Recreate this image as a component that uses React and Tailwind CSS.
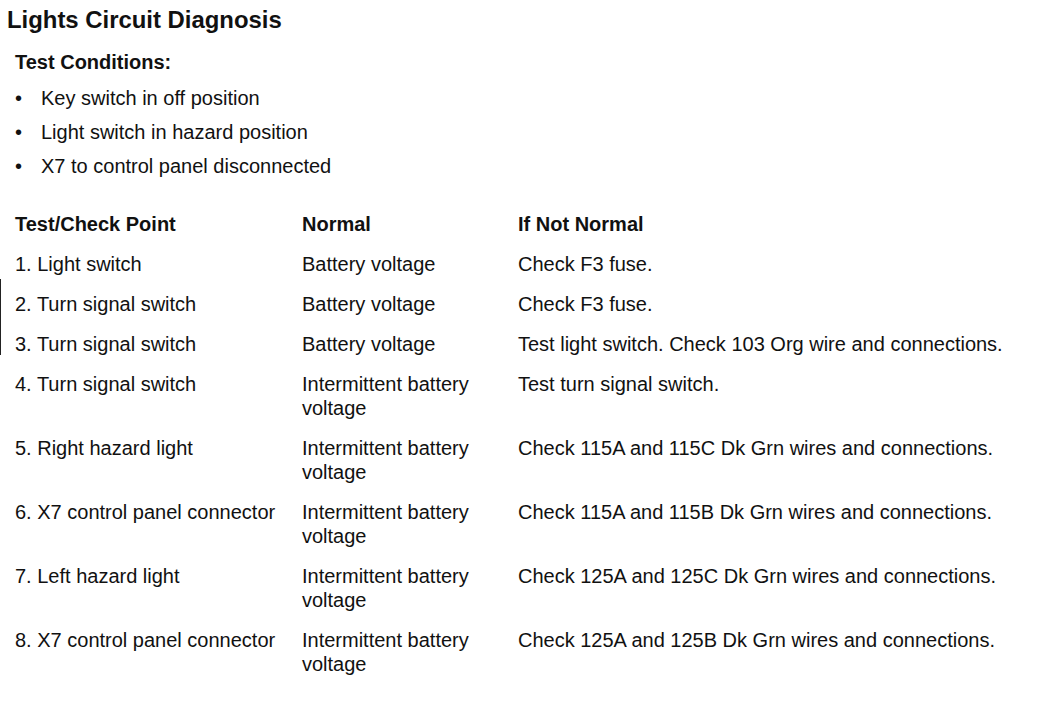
const conditions = [
  'Key switch in off position',
  'Light switch in hazard position',
  'X7 to control panel disconnected',
];

const rows = [
  ['1. Light switch', 'Battery voltage', 'Check F3 fuse.'],
  ['2. Turn signal switch', 'Battery voltage', 'Check F3 fuse.'],
  ['3. Turn signal switch', 'Battery voltage', 'Test light switch. Check 103 Org wire and connections.'],
  ['4. Turn signal switch', 'Intermittent battery voltage', 'Test turn signal switch.'],
  ['5. Right hazard light', 'Intermittent battery voltage', 'Check 115A and 115C Dk Grn wires and connections.'],
  ['6. X7 control panel connector', 'Intermittent battery voltage', 'Check 115A and 115B Dk Grn wires and connections.'],
  ['7. Left hazard light', 'Intermittent battery voltage', 'Check 125A and 125C Dk Grn wires and connections.'],
  ['8. X7 control panel connector', 'Intermittent battery voltage', 'Check 125A and 125B Dk Grn wires and connections.'],
];

export default function App() {
  return (
    <div className="relative min-h-[704px] w-[1039px] bg-white text-[#111] font-['Liberation_Sans',Arial,sans-serif] text-[20px] leading-[24px]">
      {/* change bar next to rows 2-3 */}
      <div className="absolute left-0 top-[279px] h-[76px] w-px bg-[#222]" />

      <h1 className="pt-[6px] pl-[7px] text-[23.9px] leading-[28px] font-bold">
        Lights Circuit Diagnosis
      </h1>

      <div className="pl-[15px] pt-[16px]">
        <h2 className="font-bold">Test Conditions:</h2>
        <ul className="mt-[12px] flex flex-col gap-[10px]">
          {conditions.map((c) => (
            <li key={c} className="flex">
              <span className="w-[26px] shrink-0">•</span>
              <span>{c}</span>
            </li>
          ))}
        </ul>

        <div className="mt-[34px] grid grid-cols-[287px_216px_1fr] gap-y-4">
          <div className="font-bold">Test/Check Point</div>
          <div className="font-bold">Normal</div>
          <div className="font-bold">If Not Normal</div>
          {rows.map(([point, normal, fix], i) => (
            <div key={i} className="contents">
              <div>{point}</div>
              <div className="pr-4">{normal}</div>
              <div>{fix}</div>
            </div>
          ))}
        </div>
      </div>
    </div>
  );
}
